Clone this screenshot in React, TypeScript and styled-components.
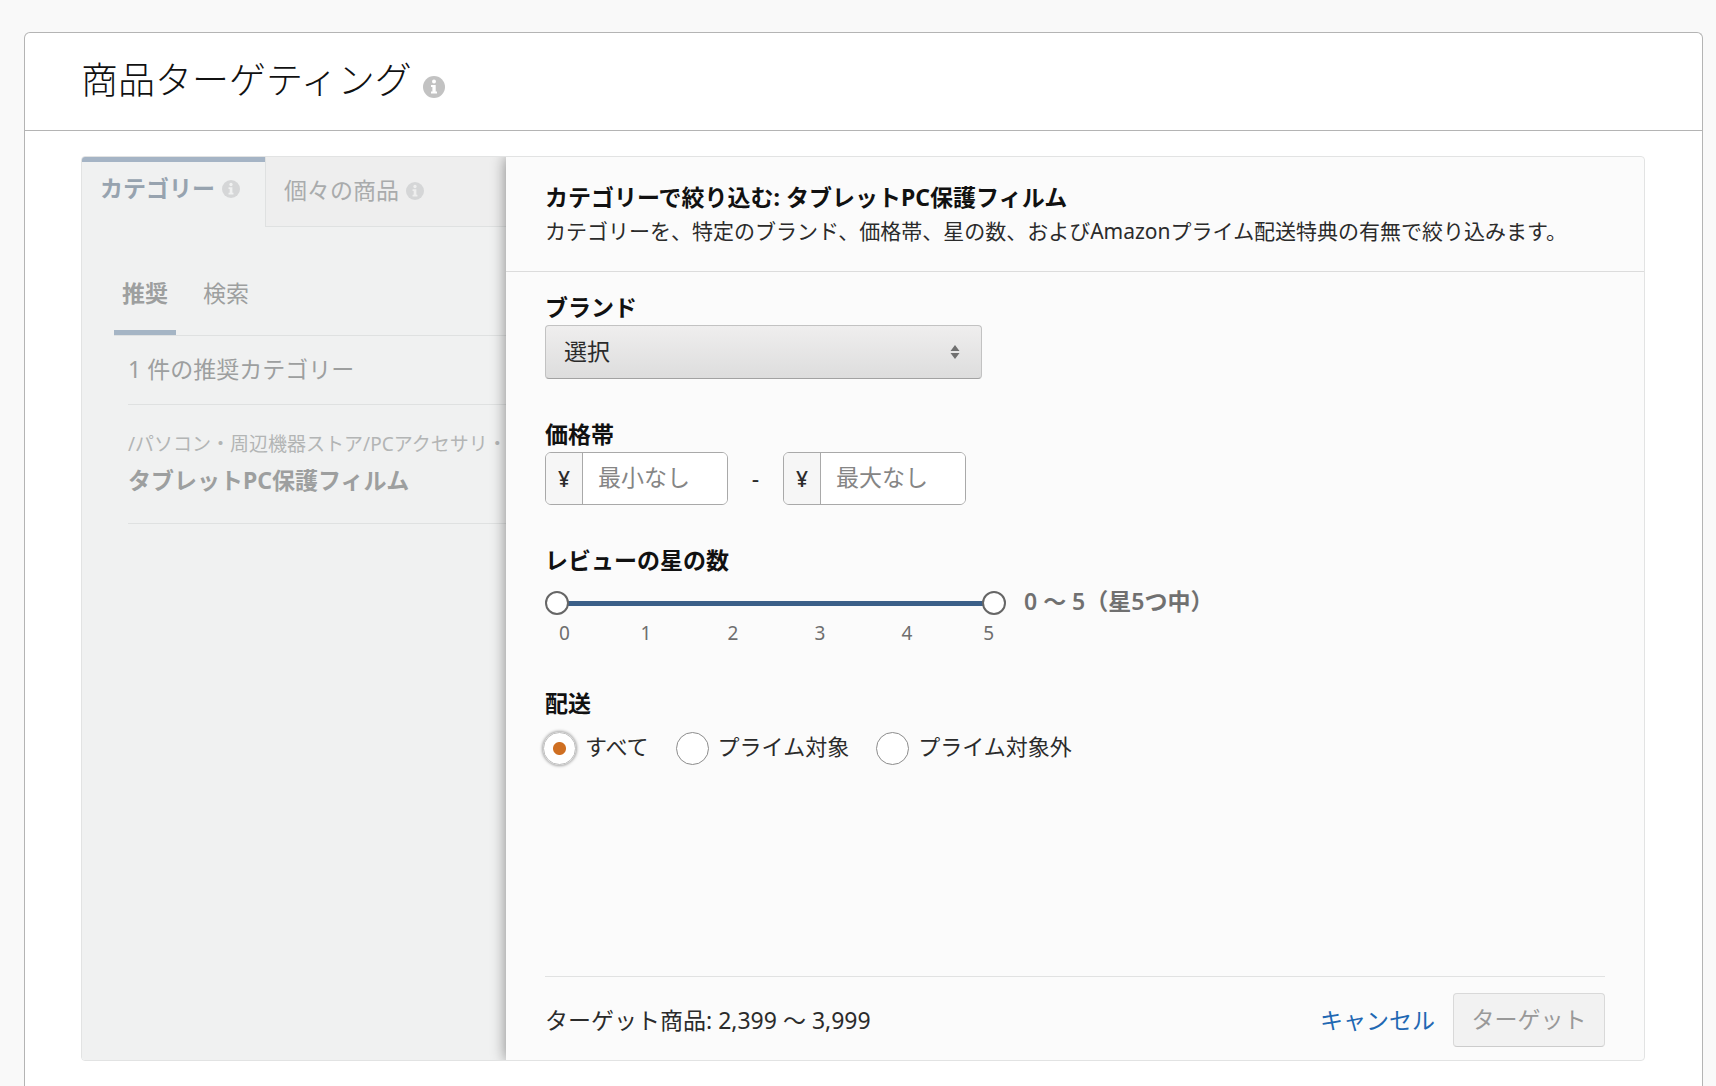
import { useState } from "react";
import styled, { createGlobalStyle, css } from "styled-components";

const GlobalStyle = createGlobalStyle`
  *, *::before, *::after { box-sizing: border-box; }
  html { background: #f9f9f9; }
  body {
    margin: 0;
    font-family: "Noto Sans", "Noto Sans CJK JP", sans-serif;
    font-size: 23px;
    line-height: 34px;
    color: #2b2b2b;
  }
  h1, h2, h3, p, ul, fieldset, legend { margin: 0; padding: 0; border: 0; font-size: inherit; }
  button, input, select { font: inherit; color: inherit; }
`;

const Page = styled.div`
  min-height: 100vh;
  padding: 32px 13px 0 24px;
`;

const Card = styled.main`
  min-height: calc(100vh - 32px);
  background: #fff;
  border: 1px solid #b4b4b4;
  border-bottom: 0;
  border-radius: 6px 6px 0 0;
`;

const CardHeader = styled.header`
  display: flex;
  align-items: flex-end;
  gap: 11px;
  height: 98px;
  padding: 0 56px 32px;
  border-bottom: 1px solid #b4b4b4;
`;

const CardTitle = styled.h1`
  && { padding-bottom: 2px; }
  font-family: "Noto Sans CJK JP", sans-serif;
  font-size: 37px;
  font-weight: 300;
  line-height: 36px;
  color: #111;
`;

const CardBody = styled.div`
  padding: 25px 57px 24px 56px;
`;

const Workspace = styled.div`
  display: flex;
  min-height: 905px;
  border: 1px solid #e2e3e3;
  border-radius: 4px;
  overflow: hidden;
`;

const Sidebar = styled.aside`
  flex: 0 0 424px;
  overflow: hidden;
  background: #f0f1f1;
  color: #9d9f9f;
  white-space: nowrap;
`;

const Tabs = styled.div`
  display: flex;
  height: 70px;
`;

const Tab = styled.button<{ $active?: boolean }>`
  display: flex;
  align-items: center;
  gap: 7px;
  padding: 0 24px 4px 18px;
  background: #eeeeee;
  border: 0;
  border-left: 1px solid #dfe1e1;
  border-bottom: 1px solid #dfe1e1;
  color: #a9abac;
  svg { margin-top: 2px; }
  ${(p) =>
    p.$active
      ? css`
          flex: 0 0 183px;
          background: #f0f1f1;
          border-top: 5px solid #a5b4c5;
          border-left: 0;
          border-bottom: 0;
          padding-bottom: 13px;
          font-weight: 700;
          color: #97a3af;
        `
      : css`
          flex: 1;
        `}
`;

const SubTabs = styled.div`
  display: flex;
  margin: 43px 0 0 32px;
  border-bottom: 1px solid #dfe1e1;
`;

const SubTab = styled.button<{ $active?: boolean }>`
  height: 65px;
  margin-right: 19px;
  padding: 0 8px 15px;
  background: none;
  border: 0;
  border-bottom: 5px solid transparent;
  font-weight: ${(p) => (p.$active ? 700 : 400)};
  ${(p) =>
    p.$active &&
    css`
      border-bottom-color: #a5b5c5;
    `}
`;

const Suggestions = styled.section`
  margin-left: 46px;
`;

const SuggestionCount = styled.p`
  && { padding: 16px 0 18px; }
  border-bottom: 1px solid #dfe1e1;
`;

const Suggestion = styled.div`
  padding: 22px 0 26px;
  border-bottom: 1px solid #dfe1e1;
`;

const CategoryPath = styled.p`
  font-size: 19px;
  color: #b3b5b5;
`;

const CategoryName = styled.p`
  && { padding-top: 2px; }
  font-weight: 700;
`;

const Refine = styled.section`
  display: flex;
  flex: 1;
  flex-direction: column;
  min-width: 0;
  position: relative;
  background: #fbfbfb;
  box-shadow: 0 0 14px rgba(0, 0, 0, 0.45);
`;

const RefineHeader = styled.header`
  padding: 23px 39px 23px;
  border-bottom: 1px solid #dcdcdc;
`;

const RefineTitle = styled.h2`
  font-weight: 700;
  color: #111;
`;

const RefineHint = styled.p`
  && { font-size: 21px; }
`;

const Form = styled.form`
  display: flex;
  flex: 1;
  flex-direction: column;
  padding: 19px 39px 13px;
`;

const Fields = styled.div`
  display: flex;
  flex: 1;
  flex-direction: column;
  gap: 39px;
`;

const Field = styled.fieldset`
  min-width: 0;
`;

const fieldTitle = css`
  display: block;
  padding-bottom: 2px;
  line-height: 32px;
  font-weight: 700;
  color: #111;
`;

const FieldLabel = styled.label`
  ${fieldTitle}
`;

const FieldLegend = styled.legend`
  && { ${fieldTitle} }
`;

const SelectBox = styled.div`
  display: grid;
  align-items: center;
  width: 437px;
  > * { grid-area: 1 / 1; }
  svg {
    justify-self: end;
    margin-right: 21px;
    pointer-events: none;
  }
`;

const Select = styled.select`
  appearance: none;
  width: 100%;
  height: 54px;
  padding: 0 48px 2px 18px;
  background: linear-gradient(#efeeee, #dddddd);
  border: 1px solid #c2c2c2;
  border-bottom-color: #a2a2a2;
  border-radius: 4px;
`;

const PriceRow = styled.div`
  display: flex;
  align-items: center;
`;

const Dash = styled.span`
  flex: 0 0 55px;
  padding-bottom: 2px;
  text-align: center;
`;

const PriceBox = styled.label`
  display: flex;
  width: 183px;
  height: 53px;
  overflow: hidden;
  background: #fff;
  border: 1px solid #a9a9a9;
  border-radius: 6px;
`;

const Currency = styled.span`
  flex: 0 0 37px;
  padding-top: 9px;
  background: #f6f6f6;
  border-right: 1px solid #a9a9a9;
  font-size: 21px;
  font-weight: 500;
  text-align: center;
`;

const PriceInput = styled.input`
  flex: 1;
  min-width: 0;
  padding: 0 15px 3px;
  background: #fff;
  border: 0;
  outline: 0;
  &::placeholder { color: #858585; opacity: 1; }
`;

const SliderRow = styled.div`
  display: flex;
  align-items: center;
  gap: 18px;
  height: 24px;
  margin-top: 13px;
`;

const Slider = styled.div`
  display: grid;
  align-items: center;
  width: 461px;
  background: linear-gradient(#3b5f88, #3b5f88) center / 437px 5px no-repeat;
  > * { grid-area: 1 / 1; }
`;

const Range = styled.input`
  appearance: none;
  width: 100%;
  height: 24px;
  margin: 0;
  background: none;
  pointer-events: none;
  &::-webkit-slider-thumb {
    appearance: none;
    width: 24px;
    height: 24px;
    background: #fff;
    border: 2px solid #666;
    border-radius: 50%;
    pointer-events: auto;
  }
`;

const RangeValue = styled.output`
  padding-bottom: 4px;
  font-weight: 600;
  color: #707070;
`;

const Scale = styled.div`
  display: grid;
  grid-template-columns: 1fr 2fr 2fr 2fr 2fr 1fr;
  width: 439px;
  margin: 6px 0 3px 12px;
  padding: 0 2px;
  font-size: 19px;
  line-height: 24px;
  color: #6e6e6e;
  text-align: center;
  > :first-child { text-align: left; }
  > :last-child { text-align: right; }
`;

const Radios = styled.div`
  display: flex;
  gap: 29px;
  padding-top: 10px;
  font-size: 22px;
`;

const RadioLabel = styled.label`
  display: flex;
  align-items: center;
  gap: 9px;
  height: 34px;
  span { padding-bottom: 4px; }
`;

const Radio = styled.input`
  appearance: none;
  width: 33px;
  height: 33px;
  margin: 0 0 0 -2px;
  background: #fff;
  border: 1px solid #8c8c8c;
  border-radius: 50%;
  &:checked {
    background: radial-gradient(circle, #cf6f22 6px, #fff 7px);
    border-color: #bdbdbd;
    box-shadow: 0 0 3px 1px rgba(0, 0, 0, 0.35);
  }
`;

const Footer = styled.footer`
  display: flex;
  align-items: center;
  padding-top: 16px;
  border-top: 1px solid #e1e2e2;
`;

const Total = styled.p`
  flex: 1;
`;

const Cancel = styled.a`
  margin-right: 18px;
  color: #1f68b3;
  text-decoration: none;
`;

const Submit = styled.button`
  width: 152px;
  height: 54px;
  padding: 0 0 3px;
  background: #f2f2f2;
  border: 1px solid #d9d9d9;
  border-bottom-color: #cccccc;
  border-radius: 4px;
  &:disabled { color: #999; }
`;

function InfoIcon({ size, color, mark }: { size: number; color: string; mark: string }) {
  return (
    <svg width={size} height={size} viewBox="0 0 22 22" aria-hidden="true">
      <circle cx="11" cy="11" r="11" fill={color} />
      <circle cx="11" cy="5.5" r="2" fill={mark} />
      <path d="M8 9h4.7v6.6H14v2H8v-2h1.4V11H8z" fill={mark} />
    </svg>
  );
}

function SortArrows() {
  return (
    <svg width="12" height="14" viewBox="0 0 12 14" aria-hidden="true">
      <path d="M6 0l4.5 6h-9zM6 14L1.5 8h9z" fill="#707070" />
    </svg>
  );
}

const shippingOptions = ["すべて", "プライム対象", "プライム対象外"];

export default function App() {
  const [low, setLow] = useState(0);
  const [high, setHigh] = useState(5);
  const [shipping, setShipping] = useState(shippingOptions[0]);

  return (
    <>
      <GlobalStyle />
      <Page>
        <Card>
          <CardHeader>
            <CardTitle>商品ターゲティング</CardTitle>
            <InfoIcon size={22} color="#c2c2c2" mark="#fff" />
          </CardHeader>
          <CardBody>
            <Workspace>
              <Sidebar>
                <Tabs>
                  <Tab type="button" $active>
                    カテゴリー
                    <InfoIcon size={18} color="#d5d6d7" mark="#f0f1f1" />
                  </Tab>
                  <Tab type="button">
                    個々の商品
                    <InfoIcon size={18} color="#d5d6d7" mark="#eeeeee" />
                  </Tab>
                </Tabs>
                <SubTabs>
                  <SubTab type="button" $active>推奨</SubTab>
                  <SubTab type="button">検索</SubTab>
                </SubTabs>
                <Suggestions>
                  <SuggestionCount>1 件の推奨カテゴリー</SuggestionCount>
                  <Suggestion>
                    <CategoryPath>/パソコン・周辺機器ストア/PCアクセサリ・</CategoryPath>
                    <CategoryName>タブレットPC保護フィルム</CategoryName>
                  </Suggestion>
                </Suggestions>
              </Sidebar>
              <Refine>
                <RefineHeader>
                  <RefineTitle>カテゴリーで絞り込む: タブレットPC保護フィルム</RefineTitle>
                  <RefineHint>
                    カテゴリーを、特定のブランド、価格帯、星の数、およびAmazonプライム配送特典の有無で絞り込みます。
                  </RefineHint>
                </RefineHeader>
                <Form onSubmit={(e) => e.preventDefault()}>
                  <Fields>
                    <Field as="div">
                      <FieldLabel htmlFor="brand">ブランド</FieldLabel>
                      <SelectBox>
                        <Select id="brand">
                          <option>選択</option>
                        </Select>
                        <SortArrows />
                      </SelectBox>
                    </Field>
                    <Field>
                      <FieldLegend>価格帯</FieldLegend>
                      <PriceRow>
                        <PriceBox>
                          <Currency>¥</Currency>
                          <PriceInput type="text" inputMode="numeric" placeholder="最小なし" />
                        </PriceBox>
                        <Dash>-</Dash>
                        <PriceBox>
                          <Currency>¥</Currency>
                          <PriceInput type="text" inputMode="numeric" placeholder="最大なし" />
                        </PriceBox>
                      </PriceRow>
                    </Field>
                    <Field>
                      <FieldLegend>レビューの星の数</FieldLegend>
                      <SliderRow>
                        <Slider>
                          <Range
                            type="range"
                            aria-label="最小"
                            min={0}
                            max={5}
                            value={low}
                            onChange={(e) => setLow(Math.min(Number(e.target.value), high))}
                          />
                          <Range
                            type="range"
                            aria-label="最大"
                            min={0}
                            max={5}
                            value={high}
                            onChange={(e) => setHigh(Math.max(Number(e.target.value), low))}
                          />
                        </Slider>
                        <RangeValue>{`${low} 〜 ${high}（星5つ中）`}</RangeValue>
                      </SliderRow>
                      <Scale>
                        {[0, 1, 2, 3, 4, 5].map((n) => (
                          <span key={n}>{n}</span>
                        ))}
                      </Scale>
                    </Field>
                    <Field>
                      <FieldLegend>配送</FieldLegend>
                      <Radios>
                        {shippingOptions.map((option) => (
                          <RadioLabel key={option}>
                            <Radio
                              type="radio"
                              name="shipping"
                              checked={shipping === option}
                              onChange={() => setShipping(option)}
                            />
                            <span>{option}</span>
                          </RadioLabel>
                        ))}
                      </Radios>
                    </Field>
                  </Fields>
                  <Footer>
                    <Total>ターゲット商品: 2,399 〜 3,999</Total>
                    <Cancel href="#cancel">キャンセル</Cancel>
                    <Submit type="submit" disabled>ターゲット</Submit>
                  </Footer>
                </Form>
              </Refine>
            </Workspace>
          </CardBody>
        </Card>
      </Page>
    </>
  );
}
